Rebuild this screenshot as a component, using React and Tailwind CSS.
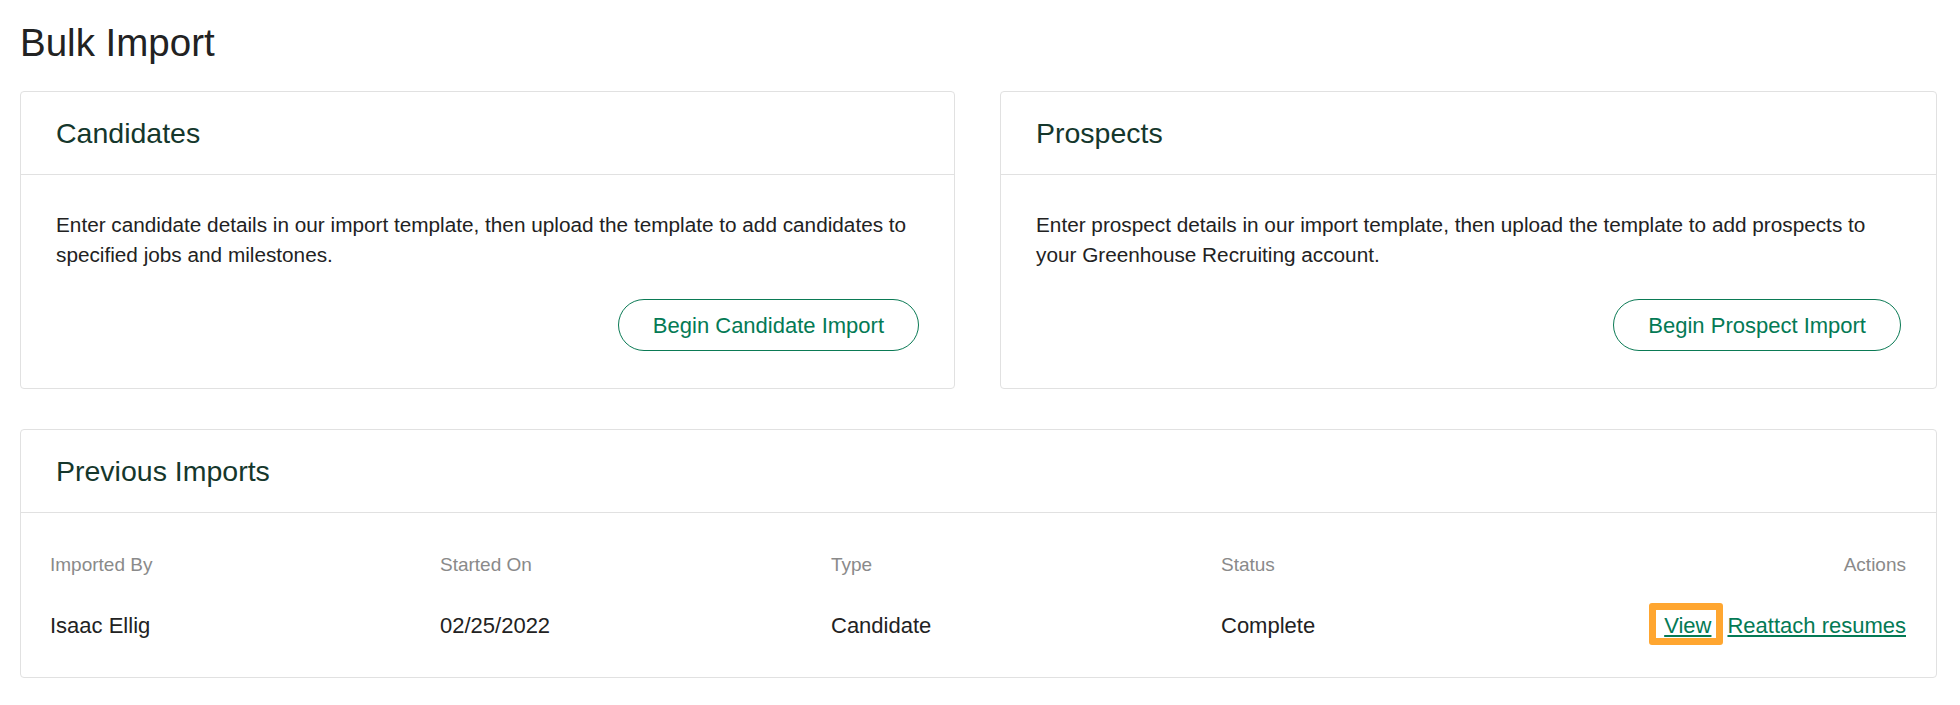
import React from "react";

function ActionCard({ title, text, button }) {
  return (
    <div className="rounded-[4px] border border-[#e1e1e1] bg-white">
      <div className="flex h-[83px] items-center border-b border-[#e1e1e1] px-[35px]">
        <h2 className="text-[28.5px] leading-[33px] text-[#15372c]">{title}</h2>
      </div>
      <div className="px-[35px] pt-[35px] pb-[37px]">
        <p className="text-[20.75px] leading-[30px] text-[#222]">{text}</p>
        <div className="mt-[29px] flex justify-end">
          <button className="inline-flex h-[52px] items-center rounded-full border border-[#0b7a55] bg-white px-[34px] text-[22px] text-[#047a55]">
            {button}
          </button>
        </div>
      </div>
    </div>
  );
}

export default function App() {
  return (
    <div
      className="min-h-[705px] bg-white pl-5 pr-[23px] pt-[20px]"
      style={{ fontFamily: '"Liberation Sans", Arial, sans-serif' }}
    >
      <h1 className="mb-[25px] text-[38.5px] leading-[46px] text-[#222]">Bulk Import</h1>

      <div className="grid grid-cols-[935px_1fr] gap-[45px]">
        <ActionCard
          title="Candidates"
          text="Enter candidate details in our import template, then upload the template to add candidates to specified jobs and milestones."
          button="Begin Candidate Import"
        />
        <ActionCard
          title="Prospects"
          text="Enter prospect details in our import template, then upload the template to add prospects to your Greenhouse Recruiting account."
          button="Begin Prospect Import"
        />
      </div>

      <div className="mt-[40px] rounded-[4px] border border-[#e1e1e1] bg-white">
        <div className="flex h-[83px] items-center border-b border-[#e1e1e1] px-[35px]">
          <h2 className="text-[28.5px] leading-[33px] text-[#15372c]">Previous Imports</h2>
        </div>
        <div className="pl-[29px] pr-[30px] pt-[38px] pb-[35px]">
          <div className="grid h-[28px] grid-cols-[390px_391px_390px_1fr_auto] items-center text-[19px] leading-[28px] text-[#8a8a8a]">
            <div>Imported By</div>
            <div>Started On</div>
            <div>Type</div>
            <div>Status</div>
            <div className="text-right">Actions</div>
          </div>
          <div className="mt-[31px] grid h-[32px] grid-cols-[390px_391px_390px_1fr_auto] items-center text-[22px] leading-[32px] text-[#222]">
            <div>Isaac Ellig</div>
            <div>02/25/2022</div>
            <div>Candidate</div>
            <div>Complete</div>
            <div className="flex items-center justify-end gap-[16px] text-[#047a55]">
              <span className="relative">
                <span className="pointer-events-none absolute -top-[7px] -bottom-[3px] -left-[15px] -right-[12px] rounded-[3px] border-[7px] border-[#ffa630]"></span>
                <a href="#" className="relative underline">View</a>
              </span>
              <a href="#" className="underline">Reattach resumes</a>
            </div>
          </div>
        </div>
      </div>
    </div>
  );
}
